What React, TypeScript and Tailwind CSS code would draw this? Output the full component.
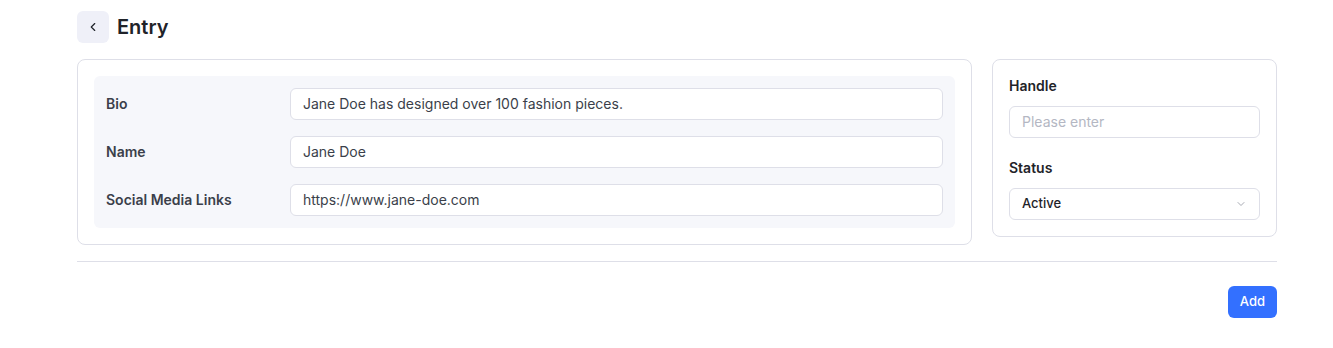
import { ChevronLeft, ChevronDown } from "lucide-react";

export default function App() {
  const rows = [
    { label: "Bio", value: "Jane Doe has designed over 100 fashion pieces." },
    { label: "Name", value: "Jane Doe" },
    { label: "Social Media Links", value: "https://www.jane-doe.com" },
  ];

  return (
    <div className="min-h-[348px] bg-white pl-[77px] pt-[11px] font-['Inter',sans-serif] text-[#1f2329]">
      <div className="w-[1200px]">
        {/* Header */}
        <div className="flex items-center gap-2">
          <button className="flex h-8 w-8 items-center justify-center rounded-md bg-[#eff0f8] text-[#1f2329]">
            <ChevronLeft size={14} strokeWidth={2} />
          </button>
          <h1 className="text-[20px] font-semibold leading-8 text-[#1f2329]">Entry</h1>
        </div>

        <div className="mt-4 flex items-start gap-5">
          {/* Main card */}
          <div className="w-[895px] rounded-lg border border-[#dedfe8] p-4">
            <div className="flex flex-col gap-4 rounded-md bg-[#f6f7fb] p-3">
              {rows.map((r) => (
                <div key={r.label} className="flex items-center">
                  <div className="w-[184px] text-sm font-semibold text-[#3b3f4a]">{r.label}</div>
                  <div className="flex h-8 flex-1 items-center rounded-md border border-[#dedfe8] bg-white px-3 text-sm text-[#3b3f4a]">
                    {r.value}
                  </div>
                </div>
              ))}
            </div>
          </div>

          {/* Side card */}
          <div className="w-[285px] rounded-lg border border-[#dedfe8] p-4">
            <div className="text-sm font-semibold leading-5 text-[#1f2329]">Handle</div>
            <div className="mt-[10px] flex h-8 items-center rounded-md border border-[#dedfe8] bg-white px-3 text-sm text-[#b4b7c3]">
              Please enter
            </div>
            <div className="mt-5 text-sm font-semibold leading-5 text-[#1f2329]">Status</div>
            <div className="mt-[10px] flex h-8 items-center justify-between rounded-md border border-[#dedfe8] bg-white px-3 text-[13px] font-medium text-[#1f2329]">
              <span>Active</span>
              <ChevronDown size={12} strokeWidth={1.5} className="text-[#8a8e99]" />
            </div>
          </div>
        </div>

        <div className="mt-4 border-t border-[#dedfe8]" />

        <div className="mt-6 flex justify-end">
          <button className="h-8 rounded-md bg-[#3370ff] px-3 text-[13px] font-medium text-white">Add</button>
        </div>
      </div>
    </div>
  );
}
